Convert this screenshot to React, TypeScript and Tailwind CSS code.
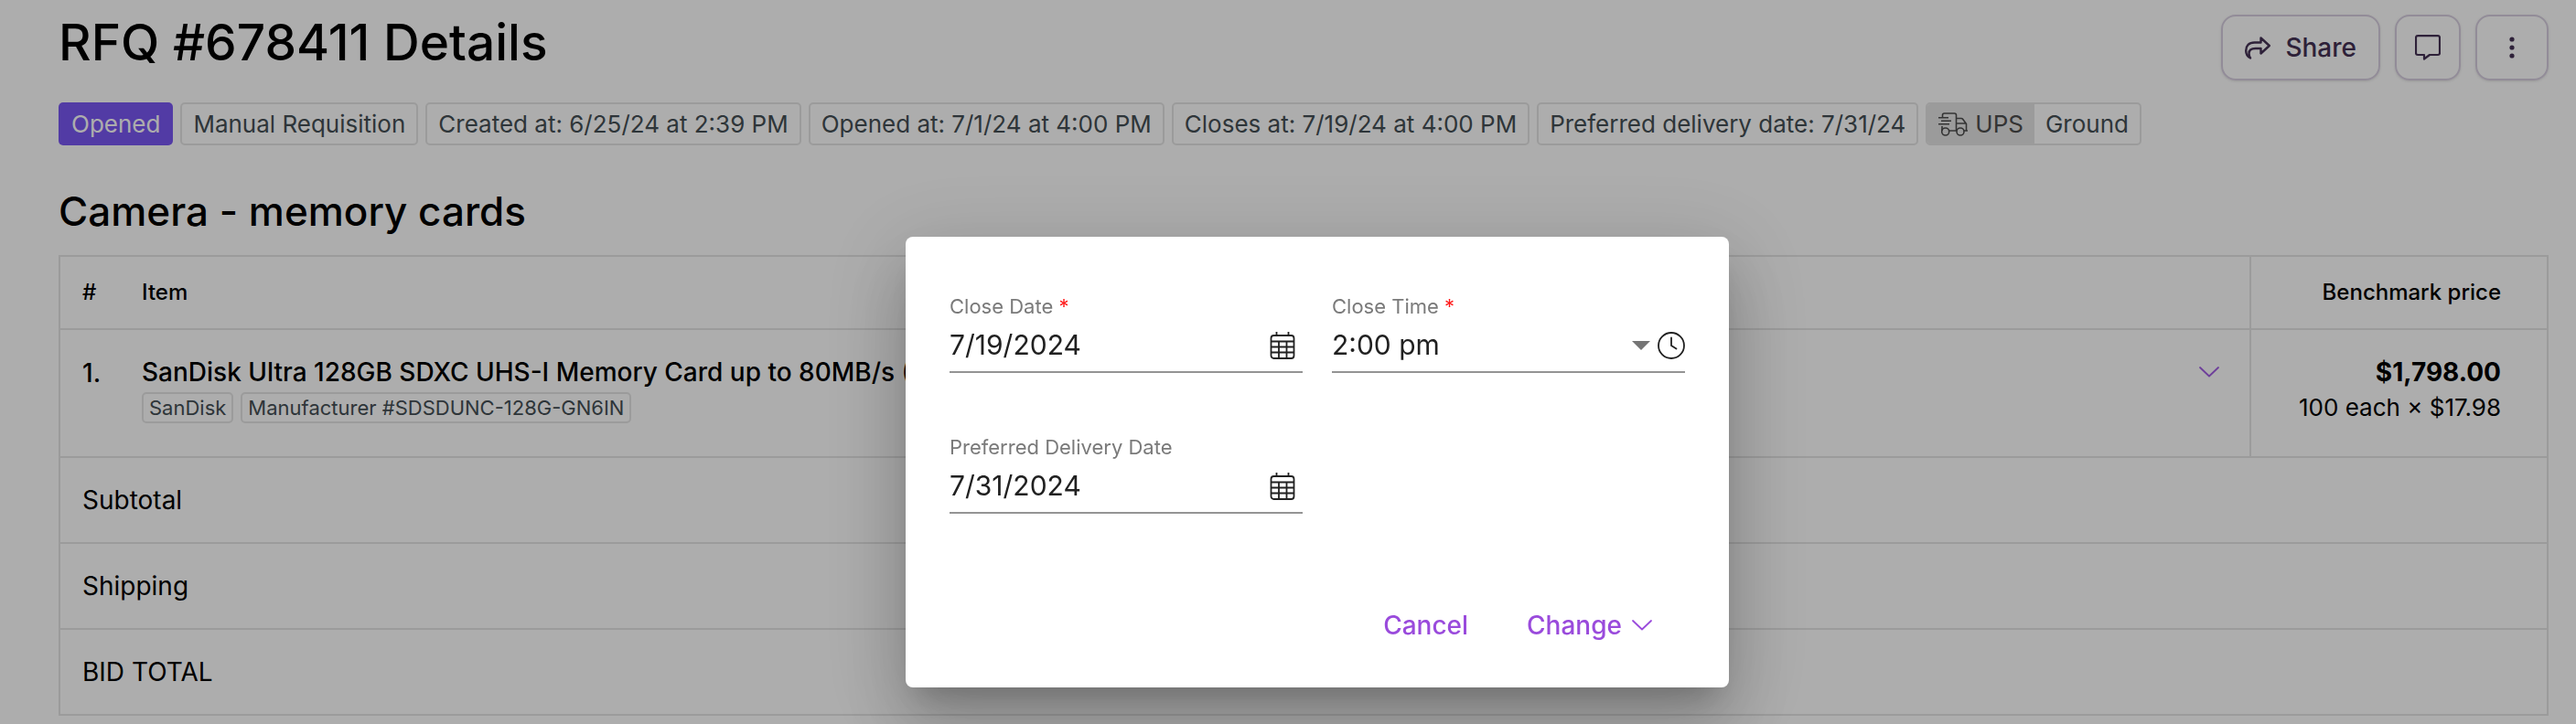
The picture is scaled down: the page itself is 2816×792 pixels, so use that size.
import React, { useState } from 'react';

interface LineItem {
  id: number;
  name: string;
  tags: string[];
  total: string;
  breakdown: string;
}

const details = [
  'Manual Requisition',
  'Created at: 6/25/24 at 2:39 PM',
  'Opened at: 7/1/24 at 4:00 PM',
  'Closes at: 7/19/24 at 4:00 PM',
  'Preferred delivery date: 7/31/24',
];

const lineItems: LineItem[] = [
  {
    id: 1,
    name: 'SanDisk Ultra 128GB SDXC UHS-I Memory Card up to 80MB/s (SDSDUNC-128G-GN6IN)',
    tags: ['SanDisk', 'Manufacturer #SDSDUNC-128G-GN6IN'],
    total: '$1,798.00',
    breakdown: '100 each × $17.98',
  },
];

const summaryRows = ['Subtotal', 'Shipping', 'BID TOTAL'];

const closeTimes = ['1:00 pm', '2:00 pm', '3:00 pm', '4:00 pm', '5:00 pm'];

const ShareIcon = () => (
  <svg className="h-7 w-7" viewBox="0 0 28 28" fill="none" stroke="currentColor" strokeWidth="2.4" strokeLinejoin="round" strokeLinecap="round">
    <path d="M17.5 3.500 26.800 12 17.500 20.500V15H11.500C7 15 4.500 17 4.500 20.500C4.500 22.500 5 24 6 25.500C3 24 1.200 21 1.200 17.500C1.200 12 4.500 8.500 10.500 8.500H17.500Z" />
  </svg>
);

const CommentIcon = () => (
  <svg className="h-7 w-7" viewBox="0 0 28 28" fill="none" stroke="currentColor" strokeWidth="2.2" strokeLinejoin="round">
    <path d="M3 1.200H25A2 2 0 0 1 27 3V20A2 2 0 0 1 25 22H16L10 26.500V22H3A2 2 0 0 1 1 20V3A2 2 0 0 1 3 1.200Z" />
  </svg>
);

const MoreIcon = () => (
  <svg className="h-7 w-7" viewBox="0 0 28 28" fill="currentColor">
    <circle cx="14" cy="5" r="2.6" />
    <circle cx="14" cy="14" r="2.6" />
    <circle cx="14" cy="23" r="2.6" />
  </svg>
);

const TruckIcon = () => (
  <svg className="h-8 w-8" viewBox="0 0 32 32" fill="none" stroke="currentColor" strokeWidth="1.6" strokeLinejoin="round">
    <path d="M4.500 8.500V6A2 2 0 0 1 6.500 4H17.500A2 2 0 0 1 19.500 6V23M19.500 9.500H25Q26 9.500 26.600 10.300L30.500 15.500V23M28 23H32M19.500 15H30.500M12 23H20M4 18V23" />
    <path d="M0 8.700H11M3 12.200H14M0 15.700H12" />
    <circle cx="7.700" cy="24" r="4" />
    <circle cx="24" cy="24" r="4" />
  </svg>
);

const ChevronIcon = () => (
  <svg className="h-3 w-6" viewBox="0 0 24 12" fill="none" stroke="currentColor" strokeWidth="1.8" strokeLinecap="round" strokeLinejoin="round">
    <path d="M2 1 12 10.500 22 1" />
  </svg>
);

const CalendarIcon = () => (
  <svg className="h-8 w-7" viewBox="0 0 28 32" fill="none" stroke="currentColor" strokeWidth="1.8">
    <rect x="1.500" y="5" width="25" height="25" rx="3" />
    <path d="M7.500 1V5M20.500 1V5M1.500 11.500H26.500M1.500 17.500H26.500M1.500 23.500H26.500M10 11.500V30M18.500 11.500V30" />
  </svg>
);

const ClockIcon = () => (
  <svg className="h-[30px] w-[30px]" viewBox="0 0 30 30" fill="none" stroke="currentColor" strokeWidth="1.8" strokeLinecap="round">
    <circle cx="15" cy="15" r="14" />
    <path d="M15 6.500V15L20.500 18.500" />
  </svg>
);

const Tag: React.FC<{ children: React.ReactNode }> = ({ children }) => (
  <span className="flex h-[47px] items-center rounded-[5px] border-2 border-[#e5e5e5] px-3 text-[26px] text-[#454f55]">
    {children}
  </span>
);

interface DateFieldProps {
  id: string;
  label: string;
  value: string;
  required?: boolean;
  onChange: (value: string) => void;
}

const DateField: React.FC<DateFieldProps> = ({ id, label, value, required, onChange }) => (
  <div className="flex flex-col">
    <label htmlFor={id} className="text-[22px] leading-[28px] text-[#7a7a7a]">
      {label} {required && <span className="text-[#ff1a1a]">*</span>}
    </label>
    <div className="flex h-[59px] items-center border-b-2 border-[#949494]">
      <input
        id={id}
        type="text"
        value={value}
        onChange={e => onChange(e.target.value)}
        className="w-full min-w-0 flex-1 bg-transparent text-[30px] text-[#212121] outline-none"
      />
      <button type="button" aria-label={`Pick ${label}`} className="mr-2 text-[#212121]">
        <CalendarIcon />
      </button>
    </div>
  </div>
);

const ChangeDatesDialog: React.FC = () => {
  const [closeDate, setCloseDate] = useState('7/19/2024');
  const [closeTime, setCloseTime] = useState('2:00 pm');
  const [deliveryDate, setDeliveryDate] = useState('7/31/2024');

  return (
    <div className="fixed inset-0 flex items-start justify-center bg-black/32 pt-[259px] pl-16">
      <div
        role="dialog"
        aria-label="Change dates"
        className="w-full max-w-[900px] rounded-lg bg-white px-12 pt-[62px] pb-9 shadow-[0_22px_30px_-14px_rgba(0,0,0,0.2),0_48px_76px_6px_rgba(0,0,0,0.14),0_18px_92px_16px_rgba(0,0,0,0.12)]"
      >
        <div className="grid grid-cols-2 gap-x-8 gap-y-[67px]">
          <DateField id="close-date" label="Close Date" value={closeDate} required onChange={setCloseDate} />
          <div className="flex flex-col">
            <label htmlFor="close-time" className="text-[22px] leading-[28px] text-[#7a7a7a]">
              Close Time <span className="text-[#ff1a1a]">*</span>
            </label>
            <div className="flex h-[59px] items-center gap-2 border-b-2 border-[#949494]">
              <select
                id="close-time"
                value={closeTime}
                onChange={e => setCloseTime(e.target.value)}
                className="min-w-0 flex-1 appearance-none bg-transparent text-[30px] text-[#212121] outline-none"
              >
                {closeTimes.map(time => (
                  <option key={time}>{time}</option>
                ))}
              </select>
              <svg className="h-[10px] w-5 text-[#757575]" viewBox="0 0 20 10" fill="currentColor">
                <path d="M0 0H20L10 10Z" />
              </svg>
              <span className="text-[#212121]">
                <ClockIcon />
              </span>
            </div>
          </div>
          <DateField id="delivery-date" label="Preferred Delivery Date" value={deliveryDate} onChange={setDeliveryDate} />
        </div>
        <div className="mt-[90px] flex justify-end gap-2 text-[28px] font-medium text-[#9a4bdc]">
          <button type="button" className="h-16 px-7">
            Cancel
          </button>
          <button type="button" className="flex h-16 items-center gap-[10px] pr-[35px] pl-7">
            Change
            <ChevronIcon />
          </button>
        </div>
      </div>
    </div>
  );
};

export default function App() {
  return (
    <div className="min-h-screen bg-white font-['Inter',sans-serif] text-black">
      <main className="pr-[30px] pl-16">
        <header className="flex items-start justify-between pt-4">
          <h1 className="text-[55px] leading-[60px] font-medium">RFQ #678411 Details</h1>
          <div className="flex gap-4 text-[28px] font-medium text-[#443154]">
            <button type="button" className="flex h-[72px] items-center gap-4 rounded-2xl border-2 border-[#d8cfe0] px-6 shadow-sm">
              <ShareIcon />
              Share
            </button>
            <button type="button" aria-label="Comments" className="flex h-[72px] w-[72px] items-center justify-center rounded-2xl border-2 border-[#d8cfe0] shadow-sm">
              <CommentIcon />
            </button>
            <button type="button" aria-label="More" className="flex h-[72px] w-20 items-center justify-center rounded-2xl border-2 border-[#d8cfe0] shadow-sm">
              <MoreIcon />
            </button>
          </div>
        </header>

        <div className="mt-6 flex gap-2">
          <span className="flex h-[47px] items-center rounded-[5px] bg-[#7a57f4] px-[14px] text-[26px] text-white">Opened</span>
          {details.map(detail => (
            <Tag key={detail}>{detail}</Tag>
          ))}
          <span className="flex h-[47px] overflow-hidden rounded-[5px] border-2 border-[#e5e5e5] text-[26px] text-[#454f55]">
            <span className="flex items-center gap-2 bg-[#e5e5e5] px-3 text-[#4d4d4d]">
              <TruckIcon />
              UPS
            </span>
            <span className="flex items-center px-3">Ground</span>
          </span>
        </div>

        <h2 className="mt-[42px] text-[44px] leading-[60px] font-medium">Camera - memory cards</h2>

        {/* Line items */}
        <table className="mt-[18px] w-full border-collapse border-2 border-[#e5e5e5] text-left">
          <thead>
            <tr className="h-20 border-b-2 border-[#e5e5e5] text-[24px]">
              <th className="w-[90px] pl-6 font-medium">#</th>
              <th className="font-medium">Item</th>
              <th className="w-[325px] border-l-2 border-[#e5e5e5] pr-[50px] text-right font-medium">Benchmark price</th>
            </tr>
          </thead>
          <tbody>
            {lineItems.map(item => (
              <tr key={item.id} className="h-[140px] border-b-2 border-[#e5e5e5] align-top">
                <td className="pt-[30px] pl-6 text-[28px] leading-[34px] font-medium">{item.id}.</td>
                <td className="pt-[29px]">
                  <div className="flex items-center justify-between pr-8">
                    <span className="text-[28px] leading-[34px] font-medium">{item.name}</span>
                    <button type="button" aria-label="Expand item" className="text-[#a25de4]">
                      <ChevronIcon />
                    </button>
                  </div>
                  <div className="mt-[5px] flex gap-2">
                    {item.tags.map(tag => (
                      <span key={tag} className="flex h-[34px] items-center rounded-[5px] border-2 border-[#e5e5e5] px-[6px] text-[22px] text-[#454f55]">
                        {tag}
                      </span>
                    ))}
                  </div>
                </td>
                <td className="border-l-2 border-[#e5e5e5] pt-[29px] pr-[50px] text-right">
                  <div className="text-[28px] leading-[34px] font-bold">{item.total}</div>
                  <div className="mt-[5px] text-[26px] leading-[34px]">{item.breakdown}</div>
                </td>
              </tr>
            ))}
            {summaryRows.map(row => (
              <tr key={row} className="h-[94px] border-b-2 border-[#e5e5e5]">
                <td colSpan={3} className="pl-6 text-[28px]">
                  {row}
                </td>
              </tr>
            ))}
          </tbody>
        </table>
      </main>

      <ChangeDatesDialog />
    </div>
  );
}
